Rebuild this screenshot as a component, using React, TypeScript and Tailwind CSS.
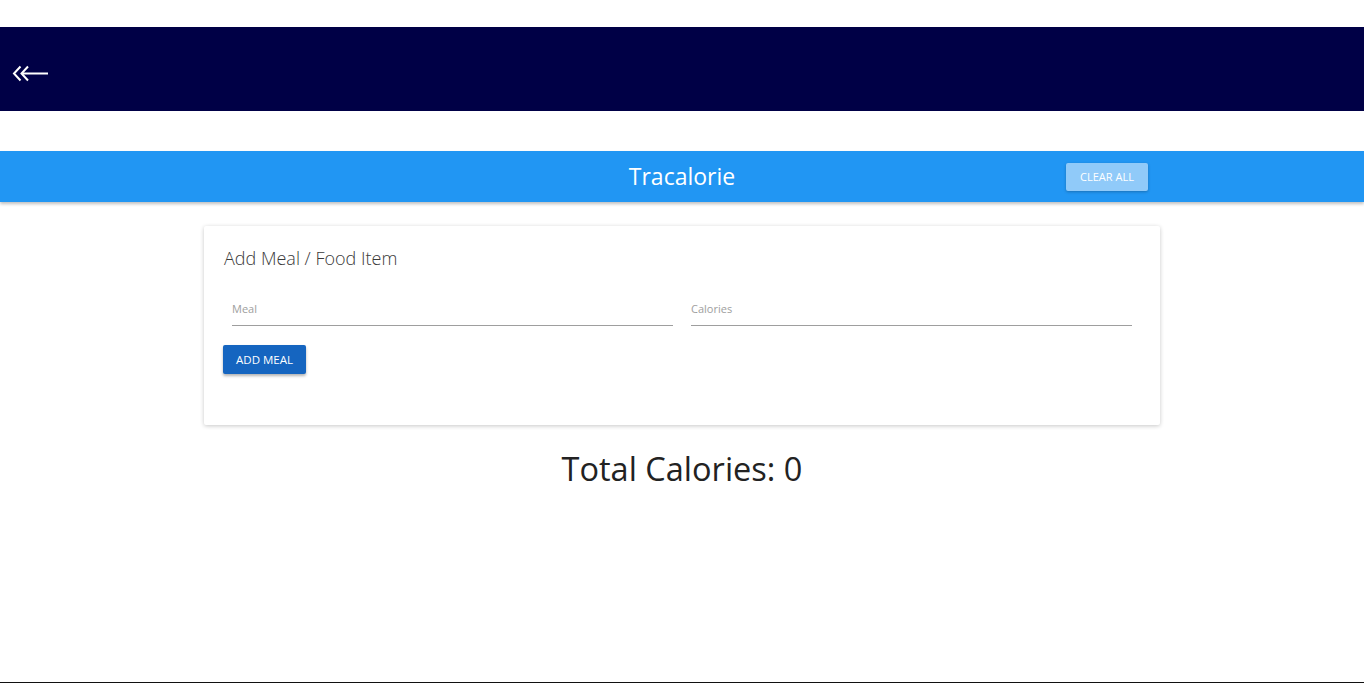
import React from 'react';

const font = { fontFamily: '"Open Sans", "Noto Sans", sans-serif' };

const BackArrow = () => (
  <svg width="40" height="20" viewBox="0 0 40 20" fill="none" stroke="white" strokeWidth="2">
    <path d="M8.5 2.5 L2 9.5 L8.5 16.5" />
    <path d="M16 2.5 L9.5 9.5 L16 16.5" />
    <path d="M11 9.5 H36" />
  </svg>
);

const Field = ({ label }: { label: string }) => (
  <div className="flex-1 px-[9px]">
    <input
      placeholder={label}
      className="w-full h-[32px] mt-[2px] pb-[2px] border-b border-[#9e9e9e] text-[11px] text-[#333] placeholder:text-[#9e9e9e] outline-none"
    />
  </div>
);

export default function App() {
  return (
    <div className="min-h-[683px] bg-white border-b border-[#111] flex flex-col" style={font}>
      <div className="h-[27px]" />
      <header className="h-[84px] bg-[#000046] flex items-center pl-[12px] pt-[9px]">
        <BackArrow />
      </header>
      <div className="h-[40px]" />
      <nav className="h-[51px] bg-[#2196f3] shadow-[0_2px_3px_rgba(0,0,0,0.25)] relative flex items-center justify-center">
        <span className="text-white text-[23px] leading-none">Tracalorie</span>
        <button className="absolute left-[1066px] top-[12px] w-[82px] h-[28px] bg-[#90caf9] text-white text-[11px] rounded-[2px] shadow-[0_1px_3px_rgba(0,0,0,0.25)]">
          CLEAR ALL
        </button>
      </nav>
      <main className="w-[956px] mx-auto mt-[24px]">
        <section className="bg-white rounded-[2px] shadow-[0_1px_4px_rgba(0,0,0,0.22)] pt-[20px] px-[19px] h-[199px]">
          <h2 className="text-[18px] font-light text-[#3a3a3a] leading-[24px] pl-[1px]">Add Meal / Food Item</h2>
          <div className="flex mt-[22px]">
            <Field label="Meal" />
            <Field label="Calories" />
          </div>
          <button className="mt-[19px] w-[83px] h-[29px] bg-[#1565c0] text-white text-[11.5px] rounded-[2px] shadow-[0_2px_3px_rgba(0,0,0,0.3)]">
            ADD MEAL
          </button>
        </section>
        <div className="text-center text-[32.5px] text-[#222] mt-[20px] leading-[48px]">Total Calories: 0</div>
      </main>
    </div>
  );
}
